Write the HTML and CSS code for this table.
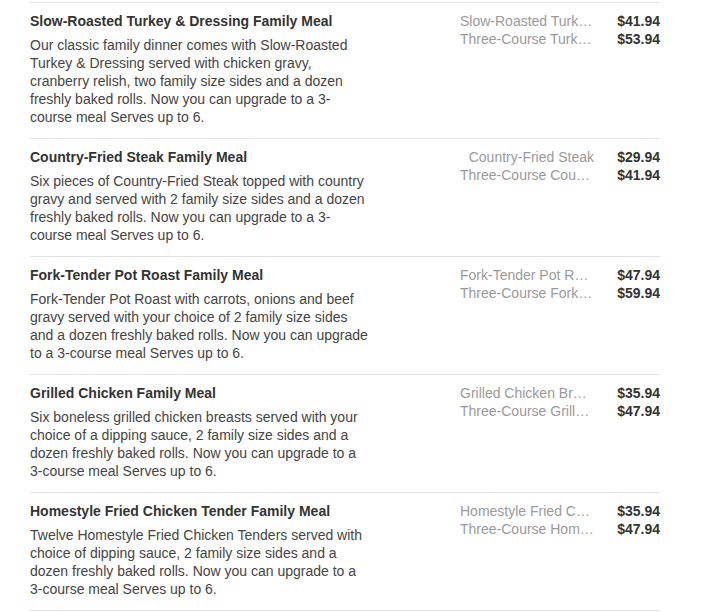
FILE: index.html
```html
<!DOCTYPE html>
<html>
<head>
<meta charset="utf-8">
<link rel="stylesheet" href="styles.css">
</head>
<body>
<div class="menu">
  <div class="item">
    <div class="info">
      <div class="title">Slow-Roasted Turkey &amp; Dressing Family Meal</div>
      <div class="desc">Our classic family dinner comes with Slow-Roasted Turkey &amp; Dressing served with chicken gravy, cranberry relish, two family size sides and a dozen freshly baked rolls. Now you can upgrade to a 3-course meal Serves up to 6.</div>
    </div>
    <div class="prices">
      <div class="line"><span class="name">Slow-Roasted Turkey &amp; Dressing Family Meal</span><span class="price">$41.94</span></div>
      <div class="line"><span class="name">Three-Course Turkey &amp; Dressing Family Meal</span><span class="price">$53.94</span></div>
    </div>
  </div>
  <div class="item">
    <div class="info">
      <div class="title">Country-Fried Steak Family Meal</div>
      <div class="desc">Six pieces of Country-Fried Steak topped with country gravy and served with 2 family size sides and a dozen freshly baked rolls. Now you can upgrade to a 3-course meal Serves up to 6.</div>
    </div>
    <div class="prices">
      <div class="line"><span class="name">Country-Fried Steak</span><span class="price">$29.94</span></div>
      <div class="line"><span class="name">Three-Course Country-Fried Steak</span><span class="price">$41.94</span></div>
    </div>
  </div>
  <div class="item">
    <div class="info">
      <div class="title">Fork-Tender Pot Roast Family Meal</div>
      <div class="desc">Fork-Tender Pot Roast with carrots, onions and beef gravy served with your choice of 2 family size sides and a dozen freshly baked rolls. Now you can upgrade to a 3-course meal Serves up to 6.</div>
    </div>
    <div class="prices">
      <div class="line"><span class="name">Fork-Tender Pot Roast Family Meal</span><span class="price">$47.94</span></div>
      <div class="line"><span class="name">Three-Course Fork-Tender Pot Roast</span><span class="price">$59.94</span></div>
    </div>
  </div>
  <div class="item">
    <div class="info">
      <div class="title">Grilled Chicken Family Meal</div>
      <div class="desc">Six boneless grilled chicken breasts served with your choice of a dipping sauce, 2 family size sides and a dozen freshly baked rolls. Now you can upgrade to a 3-course meal Serves up to 6.</div>
    </div>
    <div class="prices">
      <div class="line"><span class="name">Grilled Chicken Breasts Family Meal</span><span class="price">$35.94</span></div>
      <div class="line"><span class="name">Three-Course Grilled Chicken</span><span class="price">$47.94</span></div>
    </div>
  </div>
  <div class="item">
    <div class="info">
      <div class="title">Homestyle Fried Chicken Tender Family Meal</div>
      <div class="desc">Twelve Homestyle Fried Chicken Tenders served with choice of dipping sauce, 2 family size sides and a dozen freshly baked rolls. Now you can upgrade to a 3-course meal Serves up to 6.</div>
    </div>
    <div class="prices">
      <div class="line"><span class="name">Homestyle Fried Chicken Tenders</span><span class="price">$35.94</span></div>
      <div class="line"><span class="name">Three-Course Homestyle Fried Chicken</span><span class="price">$47.94</span></div>
    </div>
  </div>
</div>
</body>
</html>
```
FILE: styles.css
```css
html, body {
  margin: 0;
  padding: 0;
  background: #ffffff;
}
body {
  font-family: "Liberation Sans", Arial, sans-serif;
}
.menu {
  width: 630px;
  margin-left: 30px;
  padding-top: 2px;
}
.item {
  display: flex;
  justify-content: space-between;
  border-top: 1px solid #e3e3e3;
  padding: 9px 0 12px;
}
.item:last-child {
  border-bottom: 1px solid #e3e3e3;
}
.info {
  width: 340px;
}
.title {
  font-size: 14px;
  font-weight: bold;
  color: #333333;
  line-height: 18px;
  margin-bottom: 6px;
}
.desc {
  font-size: 14px;
  color: #444444;
  line-height: 18px;
}
.prices {
  display: flex;
  flex-direction: column;
}
.line {
  display: flex;
  align-items: baseline;
  gap: 18px;
  line-height: 18px;
  font-size: 14px;
}
.name {
  width: 134px;
  text-align: right;
  color: #9a9a9a;
  white-space: nowrap;
  overflow: hidden;
  text-overflow: ellipsis;
}
.price {
  width: 48px;
  text-align: right;
  font-weight: bold;
  color: #333333;
  white-space: nowrap;
}
```
